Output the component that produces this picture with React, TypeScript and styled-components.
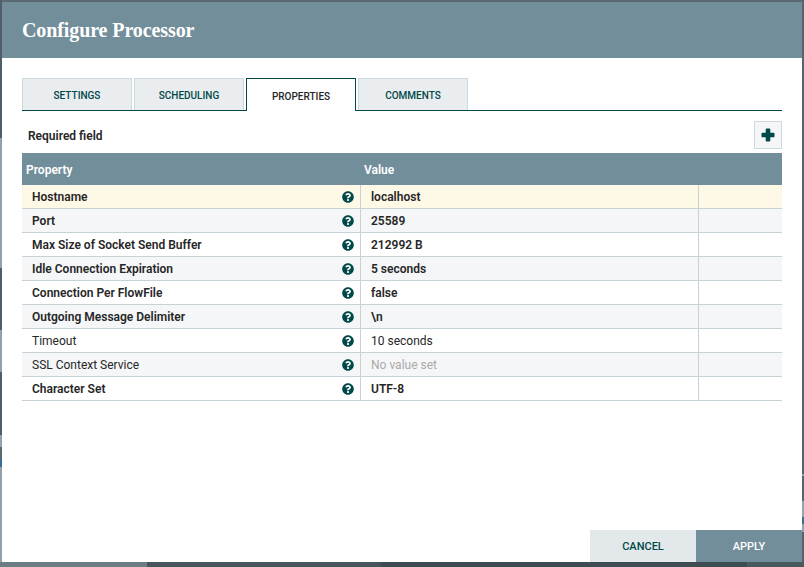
import React from "react";
import styled, { createGlobalStyle } from "styled-components";
import { FaQuestionCircle } from "react-icons/fa";

const Global = createGlobalStyle`
  html, body { margin: 0; padding: 0; width: 804px; height: 567px; overflow: hidden; }
  body {
    font-family: Roboto, "Liberation Sans", sans-serif;
    background-color: #4f5e66;
  }
  * { box-sizing: border-box; }
`;

const Backdrop = styled.div`
  width: 804px;
  height: 567px;
  padding: 2px 2px 5px 2px;
  background-color: #4f5e66;
  background-repeat: no-repeat, no-repeat, no-repeat, repeat;
  background-position: 0 0, 802px 0, 0 562px, 0 0;
  background-size: 2px 562px, 2px 562px, 804px 5px, 14px 14px;
  background-image:
    linear-gradient(
      180deg,
      #4e5f69 0 138px,
      #8fa1a9 138px 268px,
      #4e5f69 268px 330px,
      #8fa1a9 330px 372px,
      #4e5f69 372px 435px,
      #8fa1a9 435px 447px,
      #5f6a6e 447px 458px,
      #3f6a94 458px 467px,
      #8fa1a9 467px 562px
    ),
    linear-gradient(
      180deg,
      #556570 0 474px,
      #8fa1a9 474px 476px,
      #556570 476px 501px,
      #93a4ac 501px 517px,
      #3f6a94 517px 524px,
      #93a4ac 524px 532px,
      #556570 532px 562px
    ),
    linear-gradient(
      90deg,
      #6d7d84 0 147px,
      #47565d 147px 381px,
      #3e4d54 381px 747px,
      #4a5960 747px 804px
    ),
    linear-gradient(#5c6b73 1px, #56656e 1px);
`;

const Dialog = styled.div`
  width: 800px;
  height: 560px;
  background: #fff;
  display: flex;
  flex-direction: column;
`;

const Header = styled.header`
  height: 56px;
  flex: none;
  background: #728e9b;
  color: #fff;
  display: flex;
  align-items: center;
  padding-left: 20px;
`;

const Title = styled.h1`
  margin: 0;
  font-family: "Liberation Serif", serif;
  font-size: 20px;
  font-weight: 700;
  letter-spacing: -0.1px;
`;

const Body = styled.div`
  flex: 1;
  padding: 20px 20px 0;
  display: flex;
  flex-direction: column;
`;

const Tabs = styled.div`
  display: flex;
  gap: 2px;
  height: 33px;
  flex: none;
  border-bottom: 1px solid #004849;
`;

const Tab = styled.div<{ $active?: boolean }>`
  width: 110px;
  height: ${(p) => (p.$active ? "33px" : "32px")};
  display: flex;
  align-items: center;
  justify-content: center;
  font-size: 10px;
  font-weight: 500;
  text-transform: uppercase;
  background: ${(p) => (p.$active ? "#fff" : "#e9edef")};
  color: ${(p) => (p.$active ? "#262626" : "#004849")};
  border: 1px solid ${(p) => (p.$active ? "#004849" : "#cbd8dc")};
  border-bottom: 0;
  padding-top: 2px;
`;

const Toolbar = styled.div`
  height: 42px;
  flex: none;
  display: flex;
  align-items: flex-start;
  justify-content: space-between;
`;

const Required = styled.div`
  margin: 18px 0 0 6px;
  font-size: 12px;
  line-height: 14px;
  font-weight: 600;
  color: #262626;
`;

const AddButton = styled.button`
  margin-top: 10px;
  width: 28px;
  height: 28px;
  padding: 0;
  display: flex;
  align-items: center;
  justify-content: center;
  background: #f4f6f7;
  border: 1px solid #ccdadb;
  color: #004849;
`;

const Table = styled.div`
  display: flex;
  flex-direction: column;
`;

const HeadRow = styled.div`
  height: 32px;
  padding-top: 2px;
  background: #728e9b;
  color: #fff;
  display: grid;
  grid-template-columns: 338px 1fr;
  align-items: center;
  font-size: 12px;
  font-weight: 600;
`;

const HeadCell = styled.div`
  padding-left: 4px;
`;

const Row = styled.div<{ $bg: string }>`
  height: 24px;
  display: grid;
  grid-template-columns: 338px 338px 1fr;
  background: ${(p) => p.$bg};
  border-bottom: 1px solid #c7d2d7;
  font-size: 12px;
  color: #262626;
`;

const NameCell = styled.div<{ $required?: boolean }>`
  display: flex;
  align-items: center;
  justify-content: space-between;
  padding: 0 6px 0 10px;
  font-weight: ${(p) => (p.$required ? 600 : 400)};
`;

const ValueCell = styled.div<{ $required?: boolean; $empty?: boolean }>`
  display: flex;
  align-items: center;
  padding-left: 10px;
  border-left: 1px solid #c7d2d7;
  font-weight: ${(p) => (p.$required ? 600 : 400)};
  color: ${(p) => (p.$empty ? "#aaaaaa" : "#262626")};
`;

const SpareCell = styled.div`
  border-left: 1px solid #c7d2d7;
`;

const Help = styled.span`
  display: flex;
  color: #004849;
  font-size: 12px;
`;

const Footer = styled.div`
  height: 32px;
  flex: none;
  display: flex;
  justify-content: flex-end;
`;

const FootButton = styled.button<{ $primary?: boolean }>`
  width: 106px;
  height: 32px;
  border: 0;
  padding: 0;
  font-family: Roboto, sans-serif;
  font-size: 11px;
  font-weight: 500;
  text-transform: uppercase;
  background: ${(p) => (p.$primary ? "#728e9b" : "#e3e8eb")};
  color: ${(p) => (p.$primary ? "#fff" : "#004849")};
`;

const PlusIcon = () => (
  <svg width="14" height="14" viewBox="0 0 14 14" fill="currentColor" aria-hidden="true">
    <path d="M5.6 0.5h2.8c.5 0 .9.4.9.9v3.3h3.3c.5 0 .9.4.9.9v2.8c0 .5-.4.9-.9.9H9.3v3.3c0 .5-.4.9-.9.9H5.6c-.5 0-.9-.4-.9-.9V9.3H1.4c-.5 0-.9-.4-.9-.9V5.6c0-.5.4-.9.9-.9h3.3V1.4c0-.5.4-.9.9-.9z" />
  </svg>
);

const rows = [
  { name: "Hostname", value: "localhost", required: true, bg: "#fef9e6" },
  { name: "Port", value: "25589", required: true, bg: "#f4f6f7" },
  { name: "Max Size of Socket Send Buffer", value: "212992 B", required: true, bg: "#ffffff" },
  { name: "Idle Connection Expiration", value: "5 seconds", required: true, bg: "#f4f6f7" },
  { name: "Connection Per FlowFile", value: "false", required: true, bg: "#ffffff" },
  { name: "Outgoing Message Delimiter", value: "\\n", required: true, bg: "#f4f6f7" },
  { name: "Timeout", value: "10 seconds", required: false, bg: "#ffffff" },
  { name: "SSL Context Service", value: "No value set", required: false, empty: true, bg: "#f4f6f7" },
  { name: "Character Set", value: "UTF-8", required: true, bg: "#ffffff" },
];

export default function App() {
  return (
    <Backdrop>
      <Global />
      <Dialog>
        <Header>
          <Title>Configure Processor</Title>
        </Header>
        <Body>
          <Tabs>
            <Tab>Settings</Tab>
            <Tab>Scheduling</Tab>
            <Tab $active>Properties</Tab>
            <Tab>Comments</Tab>
          </Tabs>
          <Toolbar>
            <Required>Required field</Required>
            <AddButton aria-label="Add property">
              <PlusIcon />
            </AddButton>
          </Toolbar>
          <Table>
            <HeadRow>
              <HeadCell>Property</HeadCell>
              <HeadCell>Value</HeadCell>
            </HeadRow>
            {rows.map((r) => (
              <Row key={r.name} $bg={r.bg}>
                <NameCell $required={r.required}>
                  {r.name}
                  <Help>
                    <FaQuestionCircle />
                  </Help>
                </NameCell>
                <ValueCell $required={r.required} $empty={r.empty}>
                  {r.value}
                </ValueCell>
                <SpareCell />
              </Row>
            ))}
          </Table>
        </Body>
        <Footer>
          <FootButton>Cancel</FootButton>
          <FootButton $primary>Apply</FootButton>
        </Footer>
      </Dialog>
    </Backdrop>
  );
}
